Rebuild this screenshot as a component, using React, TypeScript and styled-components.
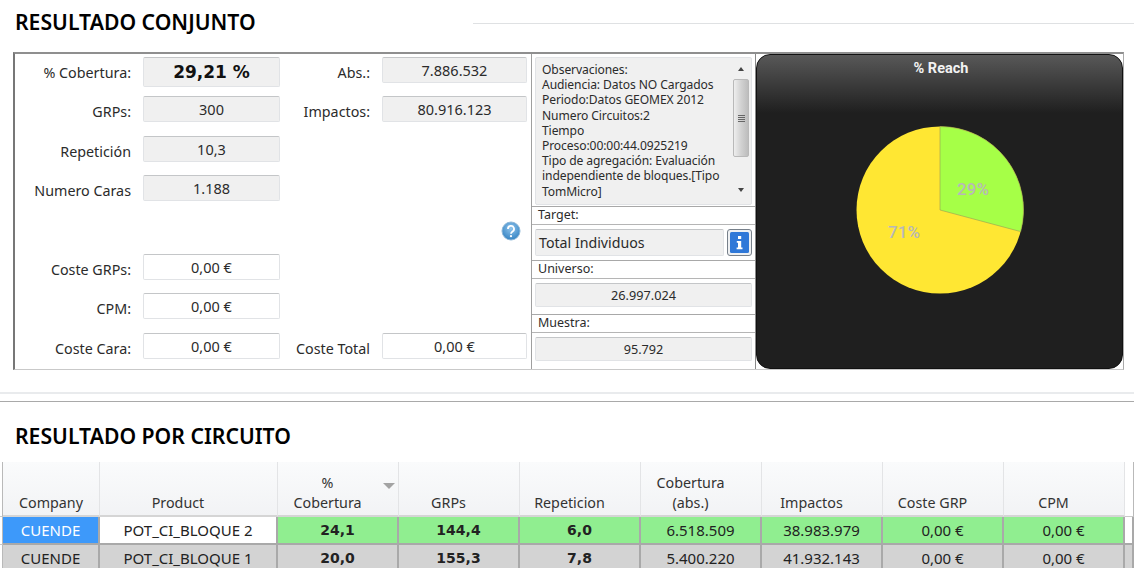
import React from 'react'
import styled, { createGlobalStyle } from 'styled-components'

const UI_FONT = '"Noto Sans", "DejaVu Sans", sans-serif'

const GlobalStyle = createGlobalStyle`
  html, body {
    margin: 0;
    background: #fff;
  }
  body {
    font-family: ${UI_FONT};
    color: #222;
  }
`

const Page = styled.div`
  width: 1134px;
  height: 568px;
  overflow: hidden;
  background: #fff;
`

const TitleRow = styled.div`
  height: 52px;
  display: flex;
  align-items: flex-start;
  padding-left: 15px;
`
const Title = styled.h1`
  margin: 7px 0 0;
  font-size: 21.2px;
  line-height: 29px;
  font-weight: 600;
  color: #000;
  white-space: nowrap;
`
const TitleRule = styled.div`
  width: 661px;
  height: 1px;
  margin: 23px 0 0 auto;
  background: #dfe1e3;
`

const Panel = styled.div`
  width: 1111px;
  height: 318px;
  margin-left: 13px;
  box-sizing: border-box;
  display: flex;
  border-top: 2px solid #8f8f8f;
  border-left: 2px solid #777;
  border-bottom: 1px solid #c9c9c9;
  border-right: 1px solid #aaa;
`

const Figures = styled.div`
  width: 516px;
  flex: none;
  box-sizing: border-box;
  padding-top: 3px;
  display: grid;
  grid-template-columns: 116px 137px 78px 145px;
  column-gap: 12px;
  grid-template-rows: 39px 40px 39px 39px 40px 39px 40px 26px;
`
const Label = styled.div`
  box-sizing: border-box;
  height: 26px;
  padding-top: 6px;
  text-align: right;
  font-size: 14.3px;
  line-height: 20px;
  color: #2b2b2b;
  white-space: nowrap;
`
const Field = styled.div<{ $big?: boolean; $editable?: boolean }>`
  box-sizing: border-box;
  height: ${p => (p.$big ? 30 : 26)}px;
  display: flex;
  align-items: center;
  justify-content: center;
  border: 1px solid #e1e3e6;
  border-top-color: #c4c6c8;
  border-radius: 2px;
  background: ${p => (p.$editable ? '#fff' : '#f0f0f0')};
  color: ${p => (p.$big ? '#111' : '#2b2b2b')};
  font-family: ${p => (p.$big ? '"DejaVu Sans", sans-serif' : UI_FONT)};
  font-size: ${p => (p.$big ? 17 : 14.5)}px;
  font-weight: ${p => (p.$big ? 700 : 400)};
`
const HelpRow = styled.div`
  grid-column: 1 / -1;
  display: flex;
  justify-content: flex-end;
  align-items: flex-start;
  padding: 7px 6px 0 0;
`
const Spacer = styled.div`
  grid-column: span 2;
`

const Side = styled.div`
  width: 225px;
  flex: none;
  box-sizing: border-box;
  display: flex;
  flex-direction: column;
  border-left: 1px solid #9f9f9f;
  border-right: 1px solid #8a8a8a;
`
const NotesBox = styled.div`
  box-sizing: border-box;
  height: 148px;
  margin: 3px 3px 1px 3px;
  padding: 4px 0 0 6px;
  display: flex;
  background: #f0f0f0;
  border: 1px solid #e1e3e6;
  border-radius: 2px;
`
const NotesText = styled.div`
  flex: 1;
  font-size: 12.1px;
  line-height: 15.2px;
  color: #2b2b2b;
  letter-spacing: -0.1px;
`
const Scroll = styled.div`
  width: 18px;
  margin: 0 1px 0 0;
  display: flex;
  flex-direction: column;
  align-items: center;
  padding-top: 5px;
  padding-bottom: 8px;
  box-sizing: border-box;
  height: 138px;
`
const ScrollThumb = styled.div`
  width: 16px;
  height: 78px;
  margin-top: 8px;
  display: flex;
  flex-direction: column;
  align-items: center;
  justify-content: center;
  gap: 1px;
  border: 1px solid #b9b9b9;
  border-radius: 2px;
  box-sizing: border-box;
  background: linear-gradient(to right, #eee, #d2d2d2 50%, #bdbdbd);
`
const Grip = styled.span`
  width: 7px;
  height: 1px;
  background: #666;
`
const Arrow = styled.span<{ $down?: boolean }>`
  width: 0;
  height: 0;
  border-left: 3.5px solid transparent;
  border-right: 3.5px solid transparent;
  ${p => (p.$down ? 'border-top: 4px solid #444; margin-top: auto;' : 'border-bottom: 4px solid #444;')}
`
const Heading = styled.div`
  box-sizing: border-box;
  height: 19px;
  padding-left: 6px;
  border-top: 1px solid #a8a8a8;
  border-bottom: 1px solid #b5b5b5;
  font-size: 12.5px;
  line-height: 16px;
  color: #2b2b2b;
`
const SideRow = styled.div`
  box-sizing: border-box;
  height: 35px;
  padding: 4px 3px 0;
  display: flex;
  gap: 3px;
`
const SideField = styled(Field)<{ $left?: boolean }>`
  flex: 1;
  height: 24px;
  font-size: 12.7px;
  ${p => p.$left && 'justify-content: flex-start; padding-left: 3px; height: 27px; font-size: 14.2px;'}
`
const InfoButton = styled.div`
  width: 25px;
  height: 27px;
  box-sizing: border-box;
  flex: none;
  display: flex;
  align-items: center;
  justify-content: center;
  border: 1px solid #77808a;
  border-radius: 3px;
  background: #eef0f2;
`

const Chart = styled.div`
  flex: 1;
  display: flex;
  flex-direction: column;
  align-items: center;
  border: 1px solid #111;
  border-radius: 14px;
  background: linear-gradient(to bottom, #585858 0, #1f1f1f 58px);
`
const ChartTitle = styled.div`
  margin-top: 5px;
  margin-left: 3px;
  height: 66px;
  font-family: Roboto, sans-serif;
  font-size: 14.5px;
  line-height: 17px;
  font-weight: 700;
  color: #f2f2f2;
`

const Dividers = styled.div`
  height: 7px;
  margin-top: 22px;
  border-top: 2px solid #e9ebed;
  border-bottom: 1px solid #a9a9a9;
`

const SubTitle = styled(Title)`
  margin: 19px 0 0 15px;
  height: 31px;
  line-height: 29px;
`

const Table = styled.div`
  margin-top: 10px;
  display: grid;
  grid-template-columns: 3px 97px 178px repeat(7, 121px) 9px;
  grid-template-rows: 55px 28px 28px;
`
const Gutter = styled.div`
  background: #fff;
  border-right: 1px solid #b9b9b9;
  border-bottom: 1px solid #c9c9c9;
`
const HeadCell = styled.div<{ $centred?: boolean }>`
  position: relative;
  box-sizing: border-box;
  padding-bottom: 2px;
  padding-right: ${p => (p.$centred ? 0 : 21)}px;
  display: flex;
  align-items: flex-end;
  justify-content: center;
  text-align: center;
  font-size: 14.3px;
  line-height: 20px;
  color: #333;
  background: linear-gradient(to bottom, #fafbfc, #f2f3f5);
  border-right: 1px solid #e3e4e6;
  border-bottom: 2px solid #d5d5d5;
`
const SortMark = styled.span`
  position: absolute;
  top: 21px;
  right: 3px;
  width: 0;
  height: 0;
  border-left: 6px solid transparent;
  border-right: 6px solid transparent;
  border-top: 6px solid #a3a3a3;
`
const tones = {
  green: '#90ee90',
  grey: '#d3d3d3',
  blue: '#3d99fa',
  white: '#fff',
}
const Cell = styled.div<{ $tone: keyof typeof tones; $bold?: boolean }>`
  box-sizing: border-box;
  display: flex;
  align-items: center;
  justify-content: center;
  background: ${p => tones[p.$tone]};
  color: ${p => (p.$tone === 'blue' ? '#fff' : '#222')};
  font-family: ${p => (p.$bold ? '"DejaVu Sans", sans-serif' : UI_FONT)};
  font-size: ${p => (p.$bold ? 14 : 15)}px;
  font-weight: ${p => (p.$bold ? 700 : 400)};
  border-right: 2px solid #a9a9a9;
  border-bottom: 2px solid #a9a9a9;
  white-space: nowrap;
`

const headers: string[][] = [
  ['Company'],
  ['Product'],
  ['%', 'Cobertura'],
  ['GRPs'],
  ['Repeticion'],
  ['Cobertura', '(abs.)'],
  ['Impactos'],
  ['Coste GRP'],
  ['CPM'],
]

const rows = [
  {
    tone: 'green' as const,
    companyTone: 'blue' as const,
    productTone: 'white' as const,
    cells: ['CUENDE', 'POT_CI_BLOQUE 2', '24,1', '144,4', '6,0', '6.518.509', '38.983.979', '0,00 €', '0,00 €'],
  },
  {
    tone: 'grey' as const,
    companyTone: 'grey' as const,
    productTone: 'grey' as const,
    cells: ['CUENDE', 'POT_CI_BLOQUE 1', '20,0', '155,3', '7,8', '5.400.220', '41.932.143', '0,00 €', '0,00 €'],
  },
]

function HelpIcon() {
  return (
    <svg width="20" height="20" viewBox="0 0 20 20">
      <defs>
        <radialGradient id="help" cx="50%" cy="35%" r="70%">
          <stop offset="0" stopColor="#8fc4ec" />
          <stop offset="1" stopColor="#2f7fc0" />
        </radialGradient>
      </defs>
      <circle cx="10" cy="10" r="9" fill="url(#help)" stroke="#8fb8d8" />
      <path d="M7 8a3 3 0 1 1 4.6 2.4c-1 .7-1.6 1.1-1.6 2.3" fill="none" stroke="#fff" strokeWidth="1.8" />
      <circle cx="10" cy="15.2" r="1.1" fill="#fff" />
    </svg>
  )
}

function InfoIcon() {
  return (
    <svg width="19" height="21" viewBox="0 0 19 21">
      <rect width="19" height="21" rx="1.5" fill="#2f78d8" />
      <rect x="8" y="4" width="3.2" height="3" fill="#fff" />
      <path d="M6.8 9h4.4v6.5h1.3v1.8H6.6v-1.8h1.4v-4.7H6.8z" fill="#fff" />
    </svg>
  )
}

function Pie() {
  return (
    <svg width="168" height="168" viewBox="0 0 168 168">
      <circle cx="84" cy="84" r="83.5" fill="#ffe733" />
      <path d="M84 84V.5A83.5 83.5 0 0 1 164.7 105.6Z" fill="#a6ff47" stroke="#9a9a55" strokeWidth="0.6" />
      <text x="117" y="69" textAnchor="middle" fontFamily="Roboto, sans-serif" fontSize="17" fontWeight="500" fill="#b8b8b8">29%</text>
      <text x="48" y="112" textAnchor="middle" fontFamily="Roboto, sans-serif" fontSize="17" fontWeight="500" fill="#b8b8b8">71%</text>
    </svg>
  )
}

export default function App() {
  return (
    <Page>
      <GlobalStyle />
      <TitleRow>
        <Title>RESULTADO CONJUNTO</Title>
        <TitleRule />
      </TitleRow>

      <Panel>
        <Figures>
          <Label>% Cobertura:</Label>
          <Field $big>29,21 %</Field>
          <Label>Abs.:</Label>
          <Field>7.886.532</Field>

          <Label>GRPs:</Label>
          <Field>300</Field>
          <Label>Impactos:</Label>
          <Field>80.916.123</Field>

          <Label>Repetición</Label>
          <Field>10,3</Field>
          <Spacer />

          <Label>Numero Caras</Label>
          <Field>1.188</Field>
          <Spacer />

          <HelpRow>
            <HelpIcon />
          </HelpRow>

          <Label>Coste GRPs:</Label>
          <Field $editable>0,00 €</Field>
          <Spacer />

          <Label>CPM:</Label>
          <Field $editable>0,00 €</Field>
          <Spacer />

          <Label>Coste Cara:</Label>
          <Field $editable>0,00 €</Field>
          <Label>Coste Total</Label>
          <Field $editable>0,00 €</Field>
        </Figures>

        <Side>
          <NotesBox>
            <NotesText>
              Observaciones:
              <br />
              Audiencia: Datos NO Cargados
              <br />
              Periodo:Datos GEOMEX 2012
              <br />
              Numero Circuitos:2
              <br />
              Tiempo
              <br />
              Proceso:00:00:44.0925219
              <br />
              Tipo de agregación: Evaluación
              <br />
              independiente de bloques.[Tipo
              <br />
              TomMicro]
            </NotesText>
            <Scroll>
              <Arrow />
              <ScrollThumb>
                <Grip />
                <Grip />
                <Grip />
                <Grip />
              </ScrollThumb>
              <Arrow $down />
            </Scroll>
          </NotesBox>
          <Heading>Target:</Heading>
          <SideRow>
            <SideField $left>Total Individuos</SideField>
            <InfoButton>
              <InfoIcon />
            </InfoButton>
          </SideRow>
          <Heading>Universo:</Heading>
          <SideRow>
            <SideField>26.997.024</SideField>
          </SideRow>
          <Heading>Muestra:</Heading>
          <SideRow>
            <SideField>95.792</SideField>
          </SideRow>
        </Side>

        <Chart>
          <ChartTitle>% Reach</ChartTitle>
          <Pie />
        </Chart>
      </Panel>

      <Dividers />
      <SubTitle>RESULTADO POR CIRCUITO</SubTitle>

      <Table>
        <Gutter />
        {headers.map((lines, i) => (
          <HeadCell key={lines.join(' ')} $centred={i === 0}>
            <span>
              {lines.map(line => (
                <div key={line}>{line}</div>
              ))}
            </span>
            {i === 2 && <SortMark />}
          </HeadCell>
        ))}
        <Gutter />
        {rows.map(row => (
          <React.Fragment key={row.cells[1]}>
            <Gutter />
            {row.cells.map((text, i) => (
              <Cell
                key={i}
                $tone={i === 0 ? row.companyTone : i === 1 ? row.productTone : row.tone}
                $bold={i >= 2 && i <= 4}
              >
                {text}
              </Cell>
            ))}
            <Cell $tone={row.productTone} />
          </React.Fragment>
        ))}
      </Table>
    </Page>
  )
}
